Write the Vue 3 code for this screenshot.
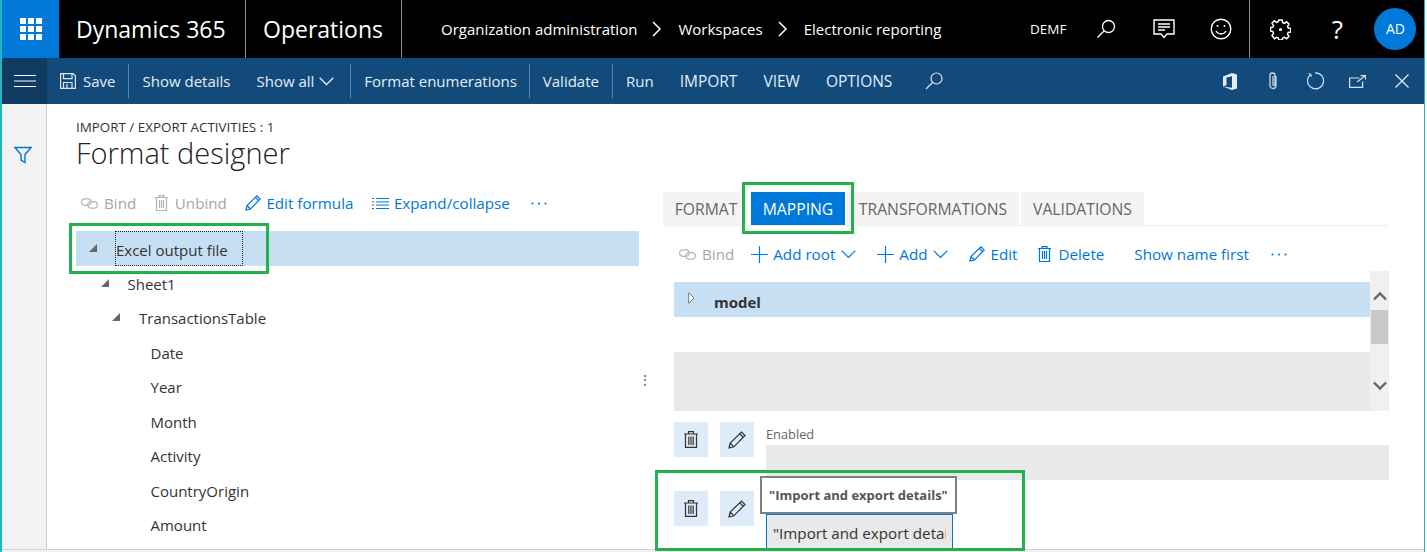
<script setup>
const treeRows = [
  { label: "Excel output file", level: 0, arrow: true, selected: true },
  { label: "Sheet1", level: 1, arrow: true },
  { label: "TransactionsTable", level: 2, arrow: true },
  { label: "Date", level: 3 },
  { label: "Year", level: 3 },
  { label: "Month", level: 3 },
  { label: "Activity", level: 3 },
  { label: "CountryOrigin", level: 3 },
  { label: "Amount", level: 3 },
];

const indent = (level) => ({ paddingLeft: `${level * 11.5}px` });
</script>

<template>
  <div class="window">
    <header class="topbar">
      <div class="waffle">
        <svg width="22" height="22" viewBox="0 0 22 22" fill="#fff">
          <rect x="0" y="0" width="6" height="6" /><rect x="8" y="0" width="6" height="6" /><rect x="16" y="0" width="6" height="6" />
          <rect x="0" y="8" width="6" height="6" /><rect x="8" y="8" width="6" height="6" /><rect x="16" y="8" width="6" height="6" />
          <rect x="0" y="16" width="6" height="6" /><rect x="8" y="16" width="6" height="6" /><rect x="16" y="16" width="6" height="6" />
        </svg>
      </div>
      <div class="brand brand-first">Dynamics 365</div>
      <div class="brand brand-second">Operations</div>
      <nav class="crumbs">
        <span>Organization administration</span>
        <svg class="crumb-arrow" width="10" height="16" viewBox="0 0 10 16"><path d="M1 1l7 7-7 7" fill="none" stroke="#fff" stroke-width="1.5" /></svg>
        <span>Workspaces</span>
        <svg class="crumb-arrow" width="10" height="16" viewBox="0 0 10 16"><path d="M1 1l7 7-7 7" fill="none" stroke="#fff" stroke-width="1.5" /></svg>
        <span>Electronic reporting</span>
      </nav>
      <div class="company">DEMF</div>
      <svg class="top-search" width="20" height="20" viewBox="0 0 20 20" fill="none" stroke="#fff" stroke-width="1.3">
        <circle cx="12.5" cy="7.5" r="6" /><path d="M8.2 11.8L1.5 18.5" />
      </svg>
      <svg class="top-chat" width="22" height="20" viewBox="0 0 22 20" fill="none" stroke="#fff" stroke-width="1.4">
        <path d="M1 1h20v14h-7l-3 3.5L8 15H1z" /><path d="M5 5h12M5 8h12M5 11h7" />
      </svg>
      <svg class="top-smile" width="22" height="22" viewBox="0 0 22 22" fill="none" stroke="#fff" stroke-width="1.4">
        <circle cx="11" cy="11" r="9.8" /><path d="M6 13c2.5 4 7.500 4 10 0" />
        <circle cx="7.500" cy="8" r="1" fill="#fff" stroke="none" /><circle cx="14.500" cy="8" r="1" fill="#fff" stroke="none" />
      </svg>
      <div class="top-sep"></div>
      <svg class="top-gear" width="21" height="21" viewBox="0 0 21 21" fill="none" stroke="#fff" stroke-width="1.5">
        <path d="M8.800 1h3.400l.5 2.600 1.700.7 2.200-1.500 2.400 2.400-1.500 2.200.7 1.700 2.600.5v3.400l-2.600.5-.7 1.700 1.500 2.200-2.400 2.400-2.200-1.500-1.700.7-.5 1.900H8.800l-.5-1.900-1.700-.7-2.200 1.500L2 16.500l1.500-2.200-.7-1.700L.5 12.100V8.700l2.300-.5.7-1.700L2 4.200l2.400-2.400 2.200 1.500 1.700-.7z" />
        <circle cx="10.500" cy="10.500" r="1.600" fill="#fff" stroke="none" />
      </svg>
      <div class="top-help">?</div>
      <div class="avatar">AD</div>
    </header>

    <div class="actionbar">
      <button class="hamburger" aria-label="Menu">
        <svg width="22" height="12" viewBox="0 0 22 12" stroke="#fff" stroke-width="1"><path d="M0 .5h22M0 6h22M0 11.500h22" /></svg>
      </button>
      <div class="action save">
        <svg width="16" height="16" viewBox="0 0 16 16" fill="none" stroke="#dfe8f1" stroke-width="1.200">
          <path d="M.6.6h12.600l2.200 2.200v12.600H.6z" /><path d="M3.500.6v5h8.500v-5M3.500 15.400V9.500h8.500v5.900" /><path d="M7 11v4" />
        </svg>
        Save
      </div>
      <div class="action-sep"></div>
      <div class="action">Show details</div>
      <div class="action showall">
        Show all
        <svg width="15" height="9" viewBox="0 0 15 9"><path d="M.7.7l6.800 6.800L14.300.7" fill="none" stroke="#e6edf4" stroke-width="1.300" /></svg>
      </div>
      <div class="action-sep"></div>
      <div class="action format">Format enumerations</div>
      <div class="action-sep"></div>
      <div class="action">Validate</div>
      <div class="action-sep"></div>
      <div class="action">Run</div>
      <div class="action caps">IMPORT</div>
      <div class="action caps">VIEW</div>
      <div class="action caps">OPTIONS</div>
      <svg class="action-search" width="18" height="18" viewBox="0 0 18 18" fill="none" stroke="#d9e3ee" stroke-width="1.200">
        <circle cx="11.500" cy="6.500" r="5.500" /><path d="M7.500 10.500L1 17" />
      </svg>
      <div class="action-right">
        <svg class="ar-office" width="14" height="17" viewBox="0 0 14 17" fill="#e6edf4">
          <path d="M0 3.500L9 0l5 1.500v14L9 17l-9-3.500 9 1.300V3.200L3.500 4.500v7.500L0 13.500z" />
        </svg>
        <svg class="ar-clip" width="10" height="18" viewBox="0 0 10 18" fill="none" stroke="#c8d6e5" stroke-width="1.300">
          <path d="M8 4v9.500a3 3 0 0 1-6 0V3.500a2.500 2.500 0 0 1 5 0v9a1 1 0 0 1-2 0V4" />
        </svg>
        <svg class="ar-refresh" width="18" height="18" viewBox="0 0 18 18" fill="none" stroke="#d9e3ee" stroke-width="1.200">
          <path d="M5 2.200a8 8 0 1 0 4-1.400" /><path d="M2.500 1.500L5 2.300l.3 2.700" stroke-width="1" />
        </svg>
        <svg class="ar-popout" width="17" height="13" viewBox="0 0 17 13" fill="none" stroke="#d9e3ee" stroke-width="1.200">
          <path d="M10.500 3H.6v9.400h13V6.500" /><path d="M8 7l8-6M11.500 .6h5v4" />
        </svg>
        <svg width="14" height="14" viewBox="0 0 14 14" stroke="#e6edf4" stroke-width="1.200"><path d="M.5.500l13 13M13.500.500l-13 13" /></svg>
      </div>
    </div>

    <div class="body">
      <aside class="filter-pane">
        <svg width="18" height="18" viewBox="0 0 18 18" fill="none" stroke="#0078d7" stroke-width="1.400">
          <path d="M1 1.500h16l-6 7v8l-4-2.500V8.500z" />
        </svg>
      </aside>

      <main class="content">
        <div class="page-head">
          <div class="caption">IMPORT / EXPORT ACTIVITIES : 1</div>
          <h1 class="page-title">Format designer</h1>
        </div>

        <div class="columns">
          <section class="left-col">
            <div class="toolbar left-toolbar">
              <span class="tool disabled">
                <svg width="17" height="11" viewBox="0 0 17 11" fill="none" stroke="#b5b5b5" stroke-width="1.200">
                  <rect x=".6" y=".8" width="9.500" height="6.500" rx="3.200" /><rect x="6.800" y="3.600" width="9.500" height="6.500" rx="3.200" />
                </svg>
                Bind
              </span>
              <span class="tool disabled wide-gap">
                <svg width="13" height="16" viewBox="0 0 13 16" fill="none" stroke="#b5b5b5" stroke-width="1.200">
                  <path d="M0 2.500h13M4 2.500V.7h5v1.800M1.500 2.500v13h10v-13M4.500 5v8M6.500 5v8M8.500 5v8" />
                </svg>
                Unbind
              </span>
              <span class="tool">
                <svg width="16" height="16" viewBox="0 0 16 16" fill="none" stroke="#0078d7" stroke-width="1.200">
                  <path d="M1 15l1-4.500L12 .8l3.200 3.200L5.500 14zM2 10.500L5.500 14M10.500 2.500l3 3" />
                </svg>
                Edit formula
              </span>
              <span class="tool">
                <svg width="17" height="11" viewBox="0 0 17 11" stroke="#0078d7" stroke-width="1">
                  <path d="M0 .5h2M4 .5h13M0 3.900h2M4 3.900h13M0 7.100h2M4 7.100h13M0 10.500h2M4 10.500h13" />
                </svg>
                Expand/collapse
              </span>
              <svg class="more" width="16" height="3" viewBox="0 0 16 3" fill="#0078d7"><circle cx="1.500" cy="1.500" r="1.100" /><circle cx="8" cy="1.500" r="1.100" /><circle cx="14.500" cy="1.500" r="1.100" /></svg>
            </div>

            <div class="tree">
              <div
                v-for="row in treeRows"
                :key="row.label"
                class="tree-row"
                :class="{ selected: row.selected }"
                :style="indent(row.level)"
              >
                <span class="tree-arrow">
                  <svg v-if="row.arrow" width="8" height="8" viewBox="0 0 8 8"><path d="M8 0v8H0z" fill="#666" /></svg>
                </span>
                <span class="tree-label" :class="{ focused: row.selected }">{{ row.label }}</span>
              </div>
            </div>
          </section>

          <div class="splitter">⋮</div>

          <section class="right-col">
            <div class="tabs">
              <div class="tab tab-format">FORMAT</div>
              <div class="tab tab-mapping">MAPPING</div>
              <div class="tab tab-transformations">TRANSFORMATIONS</div>
              <div class="tab tab-validations">VALIDATIONS</div>
            </div>

            <div class="toolbar right-toolbar">
              <span class="tool disabled">
                <svg width="17" height="11" viewBox="0 0 17 11" fill="none" stroke="#b5b5b5" stroke-width="1.200">
                  <rect x=".6" y=".8" width="9.500" height="6.500" rx="3.200" /><rect x="6.800" y="3.600" width="9.500" height="6.500" rx="3.200" />
                </svg>
                Bind
              </span>
              <span class="tool">
                <svg width="17" height="17" viewBox="0 0 17 17" stroke="#0078d7" stroke-width="1.200"><path d="M8.500 0v17M0 8.500h17" /></svg>
                Add root
                <svg class="menu-chevron" width="15" height="9" viewBox="0 0 15 9"><path d="M.7.7l6.800 6.800L14.300.7" fill="none" stroke="#0078d7" stroke-width="1.200" /></svg>
              </span>
              <span class="tool">
                <svg width="17" height="17" viewBox="0 0 17 17" stroke="#0078d7" stroke-width="1.200"><path d="M8.500 0v17M0 8.500h17" /></svg>
                Add
                <svg class="menu-chevron" width="15" height="9" viewBox="0 0 15 9"><path d="M.7.7l6.800 6.800L14.300.7" fill="none" stroke="#0078d7" stroke-width="1.200" /></svg>
              </span>
              <span class="tool">
                <svg width="16" height="16" viewBox="0 0 16 16" fill="none" stroke="#0078d7" stroke-width="1.200">
                  <path d="M1 15l1-4.500L12 .8l3.200 3.200L5.500 14zM2 10.500L5.500 14M10.500 2.500l3 3" />
                </svg>
                Edit
              </span>
              <span class="tool wide-gap">
                <svg width="13" height="16" viewBox="0 0 13 16" fill="none" stroke="#0078d7" stroke-width="1.200">
                  <path d="M0 2.500h13M4 2.500V.7h5v1.800M1.500 2.500v13h10v-13M4.500 5v8M6.500 5v8M8.500 5v8" />
                </svg>
                Delete
              </span>
              <span class="tool show-name">Show name first</span>
              <svg class="more" width="16" height="3" viewBox="0 0 16 3" fill="#0078d7"><circle cx="1.500" cy="1.500" r="1.100" /><circle cx="8" cy="1.500" r="1.100" /><circle cx="14.500" cy="1.500" r="1.100" /></svg>
            </div>

            <div class="grid">
              <div class="grid-rows">
                <div class="grid-spacer"></div>
                <div class="grid-model">
                  <svg width="7" height="12" viewBox="0 0 7 12"><path d="M.7.700L6 6 .7 11.300z" fill="#fff" stroke="#777" stroke-width="1" /></svg>
                  <b>model</b>
                </div>
                <div class="grid-blank"></div>
                <div class="grid-gray"></div>
              </div>
              <div class="scrollbar">
                <svg width="14" height="10" viewBox="0 0 14 10"><path d="M1 8.500l6-6 6 6" fill="none" stroke="#666" stroke-width="2.400" /></svg>
                <div class="thumb"></div>
                <svg class="scroll-down" width="14" height="10" viewBox="0 0 14 10"><path d="M1 1.500l6 6 6-6" fill="none" stroke="#666" stroke-width="2.400" /></svg>
              </div>
            </div>

            <div class="binding binding-enabled">
              <button class="square-btn">
                <svg width="14" height="17" viewBox="0 0 14 17" fill="none" stroke="#333" stroke-width="1.200">
                  <path d="M0 3h14M4.500 3V.7h5V3M1.500 3v13.300h11V3M4.800 5.500v8.500M7 5.500v8.500M9.200 5.500v8.500" />
                </svg>
              </button>
              <button class="square-btn">
                <svg width="18" height="18" viewBox="0 0 18 18" fill="none" stroke="#333" stroke-width="1.200">
                  <path d="M1 17l1.200-5L13.500 1l3.500 3.500L5.800 15.800zM2.200 12L5.800 15.800M12 3l3.300 3.300" />
                </svg>
              </button>
              <div class="field">
                <label class="field-label">Enabled</label>
                <div class="field-box"></div>
              </div>
            </div>

            <div class="binding binding-details">
              <button class="square-btn">
                <svg width="14" height="17" viewBox="0 0 14 17" fill="none" stroke="#333" stroke-width="1.200">
                  <path d="M0 3h14M4.500 3V.7h5V3M1.500 3v13.300h11V3M4.800 5.500v8.500M7 5.500v8.500M9.200 5.500v8.500" />
                </svg>
              </button>
              <button class="square-btn">
                <svg width="18" height="18" viewBox="0 0 18 18" fill="none" stroke="#333" stroke-width="1.200">
                  <path d="M1 17l1.200-5L13.500 1l3.500 3.500L5.800 15.800zM2.200 12L5.800 15.800M12 3l3.300 3.300" />
                </svg>
              </button>
              <input class="details-input" readonly value="&quot;Import and export details&quot;" />
              <div class="tooltip">"Import and export details"</div>
            </div>
          </section>
        </div>
      </main>
    </div>
    <div class="statusline"></div>

    <div class="mark mark-tree"></div>
    <div class="mark mark-tab"></div>
    <div class="mark mark-details"></div>
  </div>
</template>

<style>
html,
body {
  margin: 0;
  background: #fff;
  overflow: hidden;
}
</style>

<style scoped>
.window {
  position: relative;
  width: 1427px;
  height: 552px;
  box-sizing: border-box;
  padding: 0 2px 0 2px;
  overflow: hidden;
  background: #fff;
  font-family: "Open Sans", "Noto Sans", sans-serif;
  font-size: 15px;
  color: #333;
  display: flex;
  flex-direction: column;
}
.window::before {
  content: "";
  position: absolute;
  left: 0;
  top: 0;
  bottom: 0;
  width: 2px;
  background: #1fb6c4;
}
.window::after {
  content: "";
  position: absolute;
  left: 1424px;
  top: 0;
  bottom: 0;
  width: 1px;
  background: #1fb6c4;
}

.topbar {
  height: 58px;
  flex: none;
  width: 1422px;
  background: #000;
  color: #fff;
  display: flex;
  align-items: center;
}
.waffle {
  width: 57px;
  height: 58px;
  background: #0078d7;
  display: flex;
  align-items: center;
  justify-content: center;
}
.brand {
  height: 58px;
  line-height: 58px;
  font-size: 23px;
  border-right: 1px solid #8a8a8a;
  box-sizing: border-box;
}
.brand-first {
  width: 187px;
  padding-left: 17px;
}
.brand-second {
  width: 156px;
  padding-left: 17px;
}
.crumbs {
  display: flex;
  align-items: center;
  margin-left: 39px;
  width: 589px;
  font-size: 15px;
}
.crumb-arrow {
  margin: 0 16px 0 15px;
}
.company {
  font-size: 13.500px;
}
.top-search {
  margin-left: 30px;
}
.top-chat {
  margin-left: 37px;
}
.top-smile {
  margin-left: 35px;
}
.top-sep {
  width: 1px;
  height: 58px;
  background: #8a8a8a;
  margin-left: 17px;
}
.top-gear {
  margin-left: 20px;
}
.top-help {
  margin-left: 32px;
  width: 28px;
  text-align: center;
  font-size: 26px;
}
.avatar {
  margin-left: 23px;
  width: 42px;
  height: 42px;
  border-radius: 50%;
  background: #0078d7;
  font-size: 14px;
  line-height: 42px;
  text-align: center;
}

.actionbar {
  height: 46px;
  flex: none;
  width: 1422px;
  background: #124a7c;
  color: #e6edf4;
  display: flex;
  align-items: center;
}
.hamburger {
  width: 45px;
  height: 46px;
  border: 0;
  padding: 0;
  background: #0f3b63;
  display: flex;
  align-items: center;
  justify-content: center;
}
.action {
  display: flex;
  align-items: center;
  gap: 7px;
  padding: 0 13px;
  white-space: nowrap;
}
.save {
  padding-right: 13px;
}
.showall {
  padding-left: 13px;
  padding-right: 16px;
  gap: 5px;
}
.format {
  padding-right: 12px;
}
.caps {
  font-size: 15.500px;
}
.action-sep {
  width: 1px;
  height: 34px;
  background: #5d85a8;
}
.action-search {
  margin-left: 20px;
}
.action-right {
  margin-left: auto;
  margin-right: 15px;
  display: flex;
  align-items: center;
}
.ar-office {
  margin-right: 31px;
}
.ar-clip {
  margin-right: 28px;
}
.ar-refresh {
  margin-right: 25px;
}
.ar-popout {
  margin-right: 29px;
}

.body {
  flex: 1;
  display: flex;
  min-height: 0;
  width: 1422px;
}
.statusline {
  flex: none;
  height: 3px;
  box-sizing: border-box;
  width: 1422px;
  border-top: 1px solid #d2d2d2;
  background: #f2f2f2;
}
.filter-pane {
  flex: none;
  background: #f2f2f2;
  border-right: 1px solid #cfcfcf;
  padding: 42px 0 0 12px;
  box-sizing: content-box;
  width: 32px;
}
.content {
  flex: 1;
  padding-left: 29px;
  min-width: 0;
}
.page-head {
  height: 84px;
  padding-top: 15px;
  box-sizing: border-box;
}
.caption {
  font-size: 13.400px;
  line-height: 16px;
  color: #333;
}
.page-title {
  margin: 0;
  font-size: 29px;
  font-weight: 300;
  line-height: 36px;
  color: #222;
}
.columns {
  display: flex;
}
.left-col {
  width: 563px;
  flex: none;
}
.splitter {
  width: 24px;
  flex: none;
  text-align: center;
  padding-top: 178px;
  font-size: 14px;
  color: #666;
  line-height: 28px;
  box-sizing: border-box;
  height: 200px;
  margin-left: -6px;
  margin-right: 6px;
}
.right-col {
  width: 726px;
  flex: none;
  padding-top: 4px;
}

.toolbar {
  display: flex;
  align-items: center;
  height: 30px;
  font-size: 15.200px;
}
.left-toolbar {
  padding-left: 5px;
}
.left-toolbar .tool {
  margin-right: 18.500px;
}
.tool {
  display: inline-flex;
  align-items: center;
  gap: 5px;
  color: #0078d7;
  margin-right: 19px;
  white-space: nowrap;
}
.tool.disabled {
  color: #a6a6a6;
  gap: 6px;
}
.tool.wide-gap {
  gap: 7px;
}
.menu-chevron {
  margin-left: 1px;
}
.more {
  margin-left: 3px;
}

.tree {
  margin-top: 13px;
}
.tree-row {
  height: 34.500px;
  display: flex;
  align-items: center;
  box-sizing: border-box;
}
.tree-row.selected {
  background: #c7dff3;
}
.tree-arrow {
  width: 39px;
  padding-left: 13px;
  box-sizing: border-box;
  display: flex;
  flex: none;
}
.tree-label {
  color: #333;
  line-height: 30px;
  padding: 2px 1px 0;
}
.tree-label.focused {
  border: 1px dotted #222;
  box-sizing: border-box;
  height: 35px;
  line-height: 33px;
  padding: 2px 14px 0 0;
}

.tabs {
  display: flex;
  height: 33px;
  border-bottom: 1px solid #eee;
  font-size: 15.700px;
}
.tab {
  display: flex;
  align-items: center;
  justify-content: center;
  background: #f4f4f4;
  color: #666;
  box-sizing: border-box;
  padding-top: 1px;
}
.tab-format {
  width: 78px;
  margin-right: 10px;
  padding-left: 8px;
}
.tab-mapping {
  width: 94px;
  margin-right: 2px;
  background: #0078d7;
  color: #fff;
}
.tab-transformations {
  width: 172px;
  margin-right: 2px;
}
.tab-validations {
  width: 123px;
}
.right-toolbar {
  height: 45px;
  box-sizing: border-box;
  padding: 11px 0 0 16px;
}
.right-toolbar .tool {
  margin-right: 21px;
}
.right-toolbar .tool.disabled {
  margin-right: 17px;
}
.right-toolbar .show-name {
  margin-left: 9px;
  margin-right: 19px;
}

.grid {
  display: flex;
  margin-left: 11px;
  height: 140px;
}
.grid-rows {
  flex: 1;
  display: flex;
  flex-direction: column;
}
.grid-spacer {
  height: 11px;
  flex: none;
}
.grid-model {
  height: 35px;
  background: #c7dff3;
  display: flex;
  align-items: center;
  padding-left: 14px;
  gap: 19px;
}
.grid-model svg {
  margin-bottom: 4px;
}
.grid-model b {
  font-weight: 700;
  color: #333;
  margin-top: 5px;
}
.grid-blank {
  height: 35px;
}
.grid-gray {
  flex: 1;
  background: #e9e9e9;
}
.scrollbar {
  width: 19px;
  background: #f0f0f0;
  display: flex;
  flex-direction: column;
  align-items: center;
  padding-top: 20px;
  box-sizing: border-box;
}
.thumb {
  width: 17px;
  height: 34px;
  background: #c8c8c8;
  margin-top: 9px;
}
.scroll-down {
  margin-top: 37px;
}

.binding {
  display: flex;
  margin-left: 11px;
  position: relative;
}
.binding-enabled {
  margin-top: 11px;
  height: 69px;
}
.binding-details {
  height: 58px;
  align-items: flex-start;
}
.square-btn {
  width: 34px;
  height: 35px;
  background: #deebf8;
  border: 0;
  padding: 0;
  margin-right: 12px;
  display: flex;
  align-items: center;
  justify-content: center;
  flex: none;
}
.field {
  flex: 1;
}
.field-label {
  display: block;
  font-size: 12.800px;
  padding-top: 1px;
  line-height: 22px;
  color: #666;
}
.field-box {
  height: 35px;
  background: #e9e9e9;
}
.details-input {
  width: 187px;
  height: 35px;
  margin: 23px 0 0;
  box-sizing: border-box;
  border: 1px solid #0078d7;
  background: #e9e9e9;
  padding: 3px 6px 0;
  font-family: inherit;
  font-size: 15.200px;
  color: #333;
  outline: none;
}
.tooltip {
  position: absolute;
  left: 86px;
  top: -15px;
  height: 38px;
  box-sizing: border-box;
  border: 2px solid #808080;
  background: #fff;
  padding: 0 7px;
  line-height: 34px;
  font-size: 13px;
  font-weight: 700;
  color: #555;
  white-space: nowrap;
}

.mark {
  position: absolute;
  box-sizing: border-box;
  border: 3px solid #22b14c;
  pointer-events: none;
}
.mark-tree {
  left: 69px;
  top: 223px;
  width: 200px;
  height: 51px;
}
.mark-tab {
  left: 742px;
  top: 182px;
  width: 112px;
  height: 52px;
}
.mark-details {
  left: 655px;
  top: 470px;
  width: 370px;
  height: 81px;
}
</style>
